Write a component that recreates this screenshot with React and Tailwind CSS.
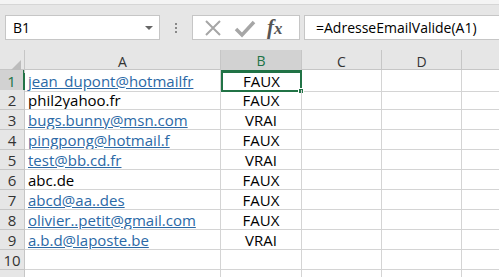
import React from 'react';

const rows = [
  { a: 'jean_dupont@hotmailfr', link: true, b: 'FAUX' },
  { a: 'phil2yahoo.fr', link: false, b: 'FAUX' },
  { a: 'bugs.bunny@msn.com', link: true, b: 'VRAI' },
  { a: 'pingpong@hotmail.f', link: true, b: 'FAUX' },
  { a: 'test@bb.cd.fr', link: true, b: 'VRAI' },
  { a: 'abc.de', link: false, b: 'FAUX' },
  { a: 'abcd@aa..des', link: true, b: 'FAUX' },
  { a: 'olivier..petit@gmail.com', link: true, b: 'FAUX' },
  { a: 'a.b.d@laposte.be', link: true, b: 'VRAI' },
  { a: '', link: false, b: '' },
  { a: '', link: false, b: '' },
];

const cols = 'grid grid-cols-[25px_196px_81px_80px_80px_1fr]';

const App = () => {
  return (
    <div className="w-[499px] h-[277px] overflow-hidden bg-white font-['Open_Sans',sans-serif]">
      {/* title strip */}
      <div className="h-[5px] bg-[#f4f4f4] border-b border-[#d6d6d6]" />

      {/* formula bar */}
      <div className="h-[45px] bg-[#e6e6e6] flex items-start pt-[10px] pl-[5px]">
        <div className="w-[155px] h-[25px] bg-white border border-[#c6c6c6] flex items-center justify-between pl-[7px] pr-[6px]">
          <span className="text-[14px] text-black">B1</span>
          <span className="w-0 h-0 border-l-[4px] border-r-[4px] border-t-[4px] border-l-transparent border-r-transparent border-t-[#666]" />
        </div>
        <div className="w-[32px] h-[25px] flex flex-col items-center justify-center gap-[2px]">
          <span className="w-[2px] h-[2px] bg-[#888]" />
          <span className="w-[2px] h-[2px] bg-[#888]" />
          <span className="w-[2px] h-[2px] bg-[#888]" />
        </div>
        <div className="w-[108px] h-[25px] bg-white border border-[#c6c6c6] flex items-center">
          <svg width="26" height="20" viewBox="0 0 26 20" className="ml-[7px]">
            <path d="M6 3 L20 17 M20 3 L6 17" stroke="#a6a6a6" strokeWidth="2" fill="none" />
          </svg>
          <svg width="26" height="20" viewBox="0 0 26 20" className="ml-[6px]">
            <path d="M4 11 L10 17 L22 4" stroke="#a6a6a6" strokeWidth="3.5" fill="none" />
          </svg>
          <span className="ml-[9px] font-['Liberation_Serif',serif] italic font-bold text-[21px] text-[#555] leading-none">
            f<span className="text-[17px]">x</span>
          </span>
        </div>
        <div className="ml-[4px] flex-1 h-[25px] bg-white border border-[#c6c6c6] border-r-0 flex items-center pl-[11px]">
          <span className="text-[14px] text-black">=AdresseEmailValide(A1)</span>
        </div>
      </div>

      {/* column headers */}
      <div className={`${cols} h-[20px] bg-[#e6e6e6] border-b border-[#c6c6c6] text-[14px] text-[#333]`}>
        <div className="border-r border-[#c6c6c6] relative">
          <span className="absolute right-[3px] bottom-[3px] w-0 h-0 border-t-[10px] border-t-transparent border-r-[10px] border-r-[#bcbcbc]" />
        </div>
        <div className="border-r border-[#c6c6c6] flex items-center justify-center">A</div>
        <div className="bg-[#d2d2d2] border-r border-[#c6c6c6] border-b-2 border-b-[#217346] flex items-center justify-center text-[#217346]">B</div>
        <div className="border-r border-[#c6c6c6] flex items-center justify-center">C</div>
        <div className="border-r border-[#c6c6c6] flex items-center justify-center">D</div>
        <div />
      </div>

      {/* rows */}
      {rows.map((r, i) => (
        <div key={i} className={`${cols} h-[20px] text-[15px] leading-[18px]`}>
          <div
            className={`border-r border-b border-[#c6c6c6] flex items-center justify-center ${
              i === 0 ? 'bg-[#d2d2d2] text-[#217346] border-r-2 border-r-[#217346]' : 'bg-[#e6e6e6] text-[#333]'
            }`}
          >
            {i < 10 ? i + 1 : ''}
          </div>
          <div className="border-r border-b border-[#d4d4d4] flex items-center pl-[3px] overflow-hidden whitespace-nowrap">
            {r.link ? (
              <span className="text-[#2b69a6] underline underline-offset-1">{r.a}</span>
            ) : (
              <span className="text-black">{r.a}</span>
            )}
          </div>
          <div
            className={`relative flex items-center justify-center text-black ${
              i === 0 ? 'border-2 border-[#217346]' : 'border-r border-b border-[#d4d4d4]'
            }`}
          >
            {r.b}
            {i === 0 && (
              <span className="absolute right-[-4px] bottom-[-4px] w-[6px] h-[6px] bg-[#217346] border border-white" />
            )}
          </div>
          <div className="border-r border-b border-[#d4d4d4]" />
          <div className="border-r border-b border-[#d4d4d4]" />
          <div className="border-b border-[#d4d4d4]" />
        </div>
      ))}
    </div>
  );
};

export default App;
